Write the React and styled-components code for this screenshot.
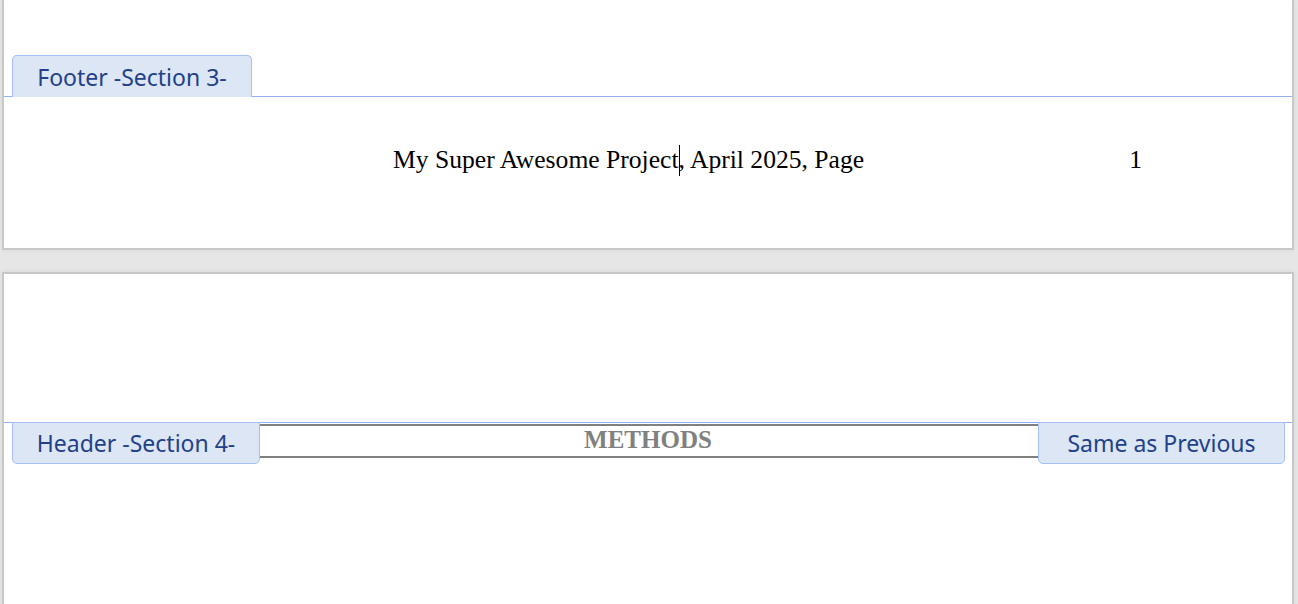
import React from "react";
import styled, { createGlobalStyle } from "styled-components";

const GlobalStyle = createGlobalStyle`
  html, body {
    margin: 0;
    padding: 0;
    background: #e6e6e6;
    overflow: hidden;
  }
`;

const Desk = styled.div`
  height: 604px;
  padding: 0 4px 0 2px;
  display: flex;
  flex-direction: column;
  gap: 22px;
  background: #e6e6e6;
  overflow: hidden;
`;

const Page = styled.div`
  flex-shrink: 0;
  box-sizing: border-box;
  background: #fff;
  border: 2px solid #c8c8c8;
  border-top: ${(props) => (props.cut ? "none" : "2px solid #c8c8c8")};
  height: ${(props) => props.height}px;
  box-shadow: 0 0 6px rgba(0, 0, 0, 0.06);
  display: flex;
  flex-direction: column;
`;

const Spacer = styled.div`
  height: ${(props) => props.size}px;
  flex-shrink: 0;
`;

const Band = styled.div`
  position: relative;
  border-top: 1px solid #93b2f6;
`;

const Tab = styled.div`
  position: absolute;
  box-sizing: border-box;
  width: ${(props) => props.width}px;
  height: 42px;
  display: flex;
  align-items: center;
  justify-content: center;
  background: #dce6f4;
  border: 1px solid #a3bff5;
  color: #22418a;
  font-family: "Noto Sans", "Open Sans", sans-serif;
  font-size: 23px;
  white-space: nowrap;
`;

const FooterTab = styled(Tab)`
  bottom: 100%;
  left: 8px;
  border-bottom: none;
  border-radius: 5px 5px 0 0;
`;

const HeaderTab = styled(Tab)`
  top: -1px;
  left: ${(props) => (props.side === "left" ? "8px" : "auto")};
  right: ${(props) => (props.side === "right" ? "7px" : "auto")};
  border-radius: 0 0 5px 5px;
  z-index: 1;
`;

const FooterLine = styled.div`
  display: flex;
  align-items: baseline;
  padding: 48px 150px 0 389px;
  font-family: "Liberation Serif", "Times New Roman", serif;
  font-size: 25.6px;
  line-height: 30px;
  color: #000;
`;

const PageNumber = styled.span`
  margin-left: auto;
`;

const Caret = styled.span`
  display: inline-block;
  width: 1.5px;
  height: 31px;
  margin-right: -1.5px;
  background: #000;
  vertical-align: -8px;
`;

const HeaderPara = styled.div`
  margin: 1px 120px 0 120px;
  border-top: 2px solid #808080;
  border-bottom: 2px solid #808080;
  padding-bottom: 2px;
  text-align: center;
  font-family: "Liberation Serif", "Times New Roman", serif;
  font-weight: bold;
  font-size: 25px;
  line-height: 28px;
  color: #808080;
`;

export default function App() {
  return (
    <>
      <GlobalStyle />
      <Desk>
        <Page cut height={250}>
          <Spacer size={96} />
          <Band>
            <FooterTab width={240}>Footer -Section 3-</FooterTab>
            <FooterLine>
              <span>
                My Super Awesome Project
                <Caret />, April 2025, Page
              </span>
              <PageNumber>1</PageNumber>
            </FooterLine>
          </Band>
        </Page>
        <Page height={400}>
          <Spacer size={148} />
          <Band>
            <HeaderTab side="left" width={248}>
              Header -Section 4-
            </HeaderTab>
            <HeaderPara>METHODS</HeaderPara>
            <HeaderTab side="right" width={247}>
              Same as Previous
            </HeaderTab>
          </Band>
        </Page>
      </Desk>
    </>
  );
}
